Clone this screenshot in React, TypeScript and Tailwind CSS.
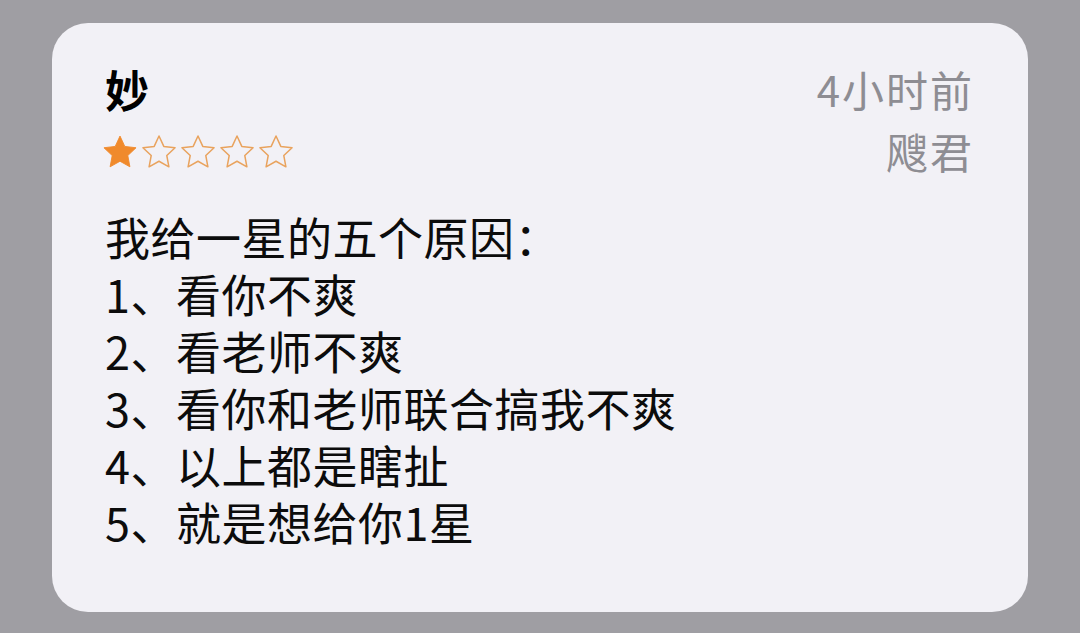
import React from "react"

const font = { fontFamily: '"Noto Sans CJK SC", "Noto Sans", sans-serif' }

function Star({ filled }: { filled?: boolean }) {
    return (
        <svg width="36" height="35" viewBox="0 0 24 23" className="shrink-0">
            <path
                d="M12 1.2l3.2 6.9 7.5.9-5.5 5.2 1.4 7.5L12 18l-6.6 3.7 1.4-7.5L1.3 9l7.5-.9z"
                fill={filled ? "#f08a2c" : "none"}
                stroke={filled ? "#f08a2c" : "#e9a35e"}
                strokeWidth={filled ? 0.6 : 1}
                strokeLinejoin="round"
            />
        </svg>
    )
}

const lines = [
    "我给一星的五个原因：",
    "1、看你不爽",
    "2、看老师不爽",
    "3、看你和老师联合搞我不爽",
    "4、以上都是瞎扯",
    "5、就是想给你1星",
]

export default function App() {
    return (
        <div className="w-[1080px] h-[633px] bg-[#9f9ea3] pt-[23px] pl-[52px]" style={font}>
            <div className="w-[976px] h-[589px] rounded-[36px] bg-[#f2f1f6] pl-[53px] pr-[56px] pt-[35px]">
                <div className="flex justify-between">
                    <div>
                        <div className="text-[44px] leading-[62px] font-bold text-black">妙</div>
                        <div className="flex gap-[3px] mt-[14px] -ml-[3px]">
                            <Star filled />
                            <Star />
                            <Star />
                            <Star />
                            <Star />
                        </div>
                    </div>
                    <div className="text-right text-[42px] leading-[62px] tracking-[2px] -mr-[2px] text-[#8e8d93]">
                        <div>4小时前</div>
                        <div>飕君</div>
                    </div>
                </div>
                <div className="mt-[26px] text-[45px] leading-[57px] tracking-[0.5px] text-[#0c0c0c]">
                    {lines.map((l) => (
                        <div key={l}>{l}</div>
                    ))}
                </div>
            </div>
        </div>
    )
}
